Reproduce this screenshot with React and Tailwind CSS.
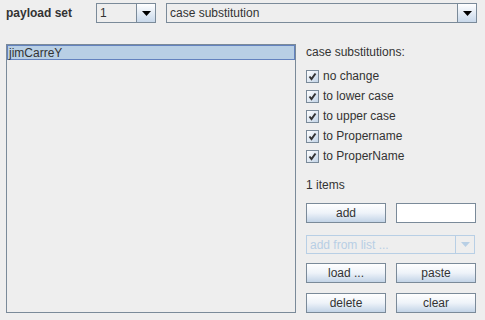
import React from "react";

function Arrow({ color = "#000000" }) {
  return (
    <svg width="9" height="5" viewBox="0 0 9 5">
      <polygon points="0,0 9,0 4.5,5" fill={color} />
    </svg>
  );
}

function Combo({ w, text, disabled }) {
  return (
    <div
      className={`flex h-full ${disabled ? "border-[#b8cfe5]" : "border-[#7a8a99]"} border bg-[#eeeeee]`}
      style={{ width: w }}
    >
      <div className={`flex-1 flex items-center pl-[3px] ${disabled ? "text-[#b8cfe5]" : "text-[#333333]"}`}>
        {text}
      </div>
      <div
        className={`w-[19px] flex items-center justify-center border-l ${
          disabled
            ? "border-[#b8cfe5] bg-[#eeeeee]"
            : "border-[#7a8a99] bg-gradient-to-b from-white to-[#c8d8ea]"
        }`}
      >
        <Arrow color={disabled ? "#b8cfe5" : "#000000"} />
      </div>
    </div>
  );
}

function Button({ children }) {
  return (
    <div className="w-[80px] h-[20px] border border-[#7a8a99] bg-gradient-to-b from-white via-[#eef3f9] to-[#c3d4e7] flex items-center justify-center text-[#333333]">
      {children}
    </div>
  );
}

function Check({ label }) {
  return (
    <div className="h-[20px] flex items-center">
      <div className="w-[13px] h-[13px] border border-[#7a8a99] bg-gradient-to-br from-white to-[#c3d4e7] flex items-center justify-center">
        <svg width="9" height="9" viewBox="0 0 9 9">
          <path d="M1.5 4.5 L3.5 7 L7.5 1.5" stroke="#333333" strokeWidth="2" fill="none" />
        </svg>
      </div>
      <span className="ml-[4px] text-[#333333]">{label}</span>
    </div>
  );
}

export default function App() {
  return (
    <div
      className="w-[485px] h-[320px] bg-[#eeeeee] text-[12px] leading-[14px] text-[#333333] overflow-hidden"
      style={{ fontFamily: '"Liberation Sans", Arial, sans-serif' }}
    >
      <div className="flex items-center h-[20px] mt-[3px] pl-[6px]">
        <div className="w-[90px] font-bold text-[#333333]">payload set</div>
        <Combo w="60px" text="1" />
        <div className="ml-[10px] h-full">
          <Combo w="311px" text="case substitution" />
        </div>
      </div>
      <div className="flex mt-[21px] pl-[6px]">
        <div className="w-[290px] h-[269px] border border-[#7a8a99] bg-[#eeeeee] p-0">
          <div className="h-[15px] border border-[#6382bf] bg-[#b8cfe5] flex items-center pl-[1px] text-[#333333]">
            jimCarreY
          </div>
        </div>
        <div className="ml-[10px] w-[170px] flex flex-col">
          <div className="h-[22px] pt-[1px]">case substitutions:</div>
          <Check label="no change" />
          <Check label="to lower case" />
          <Check label="to upper case" />
          <Check label="to Propername" />
          <Check label="to ProperName" />
          <div className="mt-[12px] h-[14px]">1 items</div>
          <div className="mt-[11px] flex justify-between">
            <Button>add</Button>
            <div className="w-[80px] h-[20px] border border-[#7a8a99] bg-white" />
          </div>
          <div className="mt-[12px] h-[19px]">
            <Combo w="169px" text="add from list ..." disabled />
          </div>
          <div className="mt-[9px] flex justify-between">
            <Button>load ...</Button>
            <Button>paste</Button>
          </div>
          <div className="mt-[10px] flex justify-between">
            <Button>delete</Button>
            <Button>clear</Button>
          </div>
        </div>
      </div>
    </div>
  );
}
